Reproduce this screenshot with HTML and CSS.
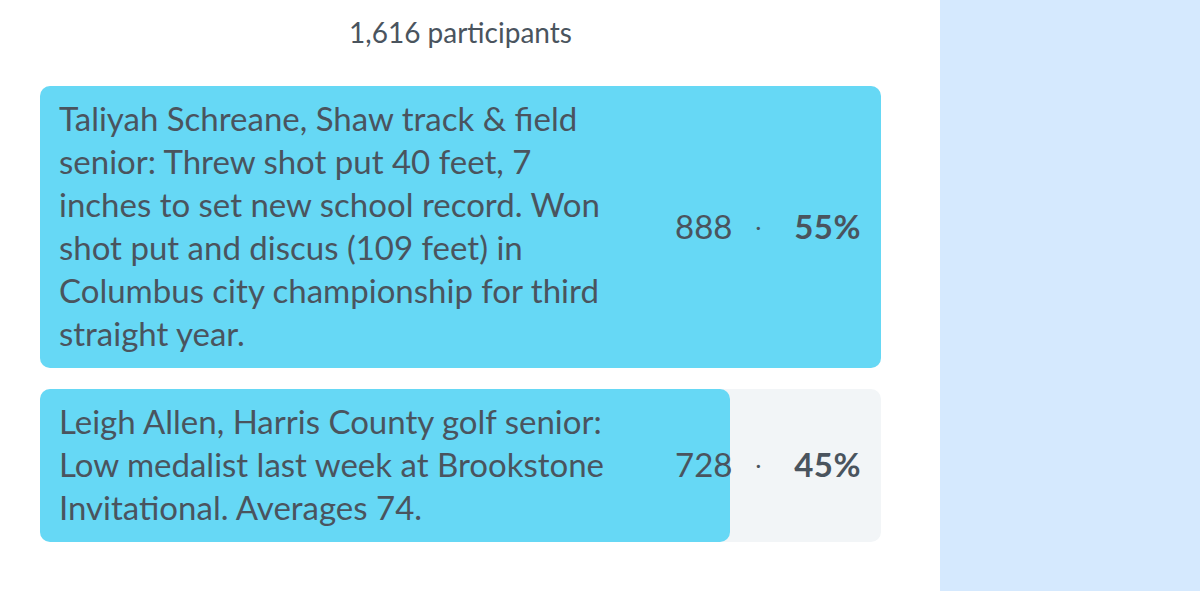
FILE: index.html
```html
<!DOCTYPE html>
<html lang="en">
<head>
    <meta charset="UTF-8">
    <meta name="viewport" content="width=device-width, initial-scale=1.0">
    <title>Athlete of the Week poll</title>
    <link rel="stylesheet" href="styles.css">
</head>
<body>
    <div class="page">
        <main class="poll">
            <p class="count">1,616 participants</p>

            <div class="choice">
                <div class="fill" style="width: 100%"></div>
                <div class="label">Taliyah Schreane, Shaw track &amp; field senior: Threw shot put 40 feet, 7 inches to set new school record. Won shot put and discus (109 feet) in Columbus city championship for third straight year.</div>
                <div class="stats">
                    <span class="votes">888</span>
                    <span class="dot">·</span>
                    <span class="pct">55%</span>
                </div>
            </div>

            <div class="choice">
                <div class="fill" style="width: 82%"></div>
                <div class="label">Leigh Allen, Harris County golf senior: Low medalist last week at Brookstone Invitational. Averages 74.</div>
                <div class="stats">
                    <span class="votes">728</span>
                    <span class="dot">·</span>
                    <span class="pct">45%</span>
                </div>
            </div>
        </main>
        <aside class="side"></aside>
    </div>
</body>
</html>
```

FILE: styles.css
```css
body {
    margin: 0;
    font-family: Lato, "Open Sans", sans-serif;
    color: #4a545e;
    background: #fff;
    overflow: hidden;
}
.page {
    display: flex;
    height: 591px;
}
.poll {
    width: 841px;
    padding: 0 59px 0 40px;
}
.side {
    flex: 1;
    background: #d5e9fe;
}
.count {
    margin: 0;
    padding: 16px 0 0;
    height: 86px;
    box-sizing: border-box;
    text-align: center;
    font-size: 28px;
    line-height: 32px;
}
.choice {
    position: relative;
    display: flex;
    align-items: center;
    background: #f2f5f7;
    border-radius: 10px;
    padding: 11px 20px 13px 19px;
    margin-bottom: 21px;
    font-size: 33px;
    line-height: 43px;
}
.fill {
    position: absolute;
    top: 0;
    left: 0;
    bottom: 0;
    background: #66d8f5;
    border-radius: 10px;
}
.label {
    position: relative;
    width: 565px;
}
.stats {
    position: relative;
    flex: 1;
    display: flex;
    justify-content: flex-end;
    align-items: center;
}
.dot {
    margin: 0 33px 0 23px;
    font-size: 22px;
}
.pct {
    font-weight: 700;
    letter-spacing: 0.5px;
}
```
